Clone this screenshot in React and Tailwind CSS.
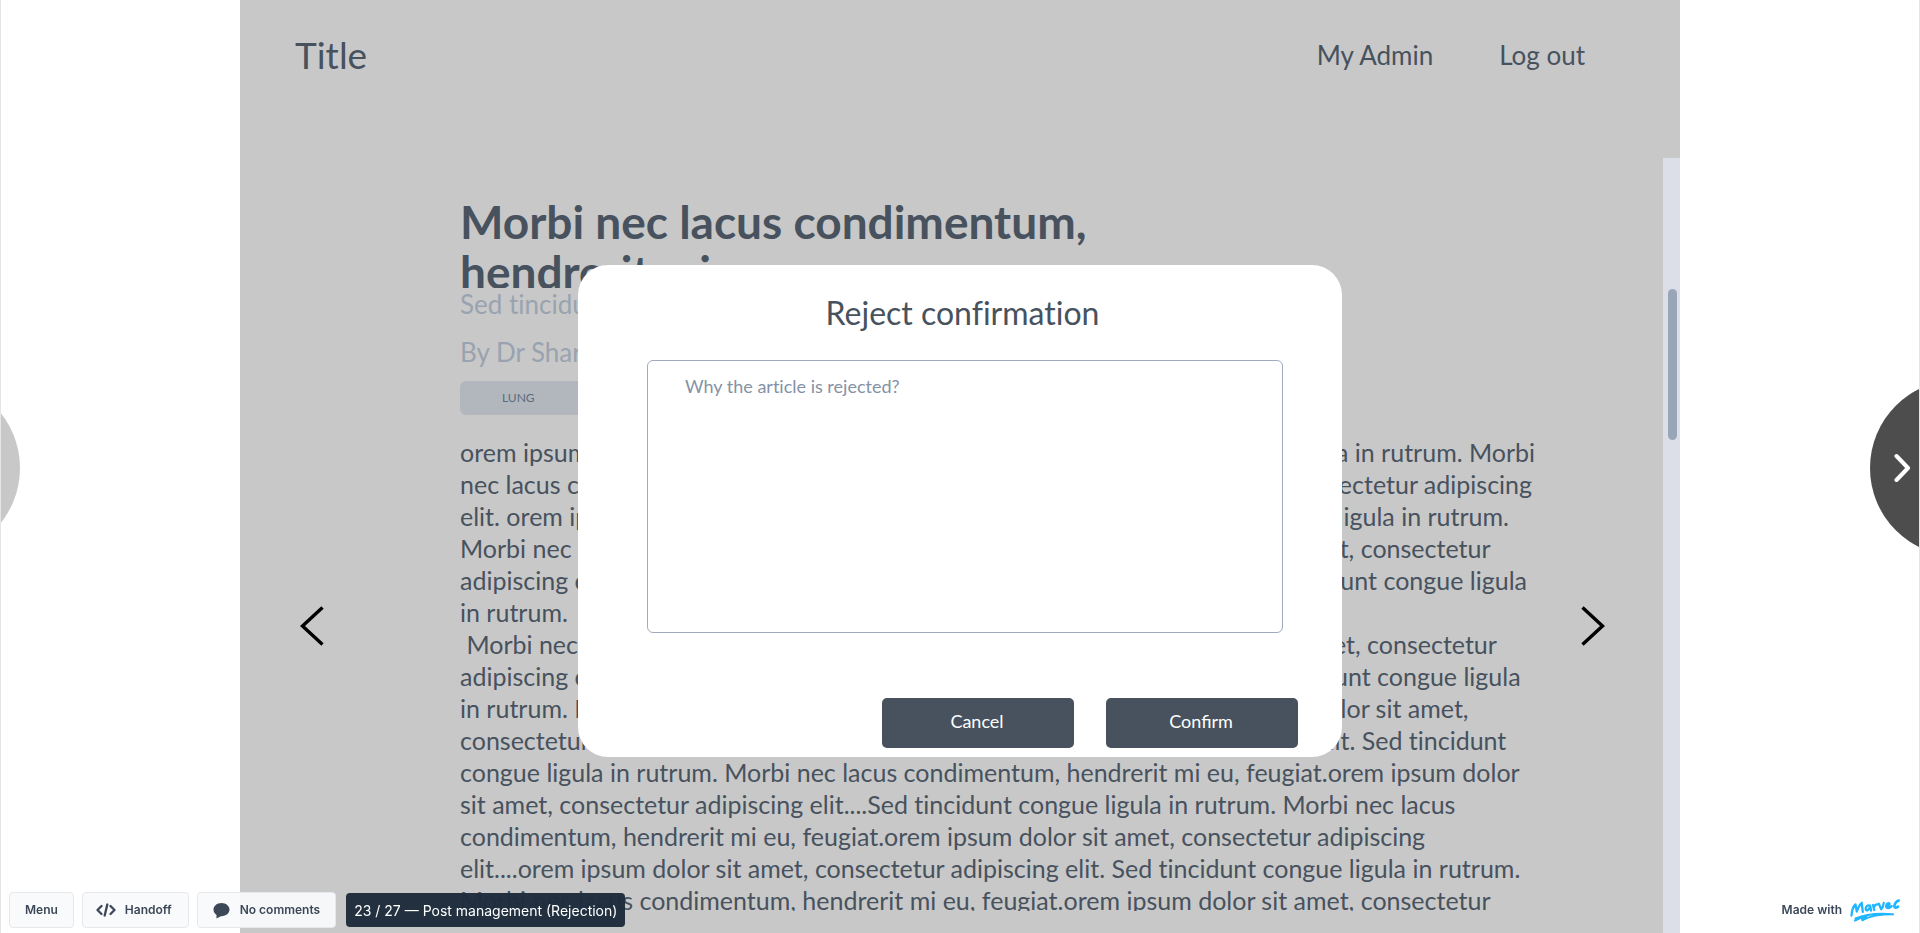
const INTRO =
  "orem ipsum dolor sit amet, consectetur adipiscing elit. Sed tincidunt congue ligula in rutrum. Morbi nec lacus condimentum, hendrerit mi eu, feugiat.orem ipsum dolor sit amet, consectetur adipiscing elit. orem ipsum dolor sit amet, consectetur adipiscing elit. Sed tincidunt congue ligula in rutrum. Morbi nec lacus condimentum, hendrerit mi eu, feugiat.orem ipsum dolor sit amet, consectetur adipiscing elit.... orem ipsum dolor sit amet, consectetur adipiscing elit. Sed tincidunt congue ligula in rutrum.";

const BODY =
  " Morbi nec lacus condimentum, hendrerit mi eu, feugiat.orem ipsum dolor sit amet, consectetur adipiscing elit....orem ipsum dolor sit amet, consectetur adipiscing elit. Sed tincidunt congue ligula in rutrum. Morbi nec lacus condimentum, hendrerit mi eu, feugiat.orem ipsum dolor sit amet, consectetur adipiscing elit....orem ipsum dolor sit amet, consectetur adipiscing elit. Sed tincidunt congue ligula in rutrum. Morbi nec lacus condimentum, hendrerit mi eu, feugiat.orem ipsum dolor sit amet, consectetur adipiscing elit....Sed tincidunt congue ligula in rutrum. Morbi nec lacus condimentum, hendrerit mi eu, feugiat.orem ipsum dolor sit amet, consectetur adipiscing elit....orem ipsum dolor sit amet, consectetur adipiscing elit. Sed tincidunt congue ligula in rutrum. Morbi nec lacus condimentum, hendrerit mi eu, feugiat.orem ipsum dolor sit amet, consectetur";

function Header() {
  return (
    <header className="flex h-[158px] items-start justify-between pl-[55px] pr-[95px]">
      <a href="#title" className="mt-[31px] text-[37px] leading-[48px]">Title</a>
      <nav className="mt-[31px] flex gap-[66px] text-[26px] leading-[48px]">
        <a href="#admin">My Admin</a>
        <a href="#logout">Log out</a>
      </nav>
    </header>
  );
}

function Article() {
  return (
    <article className="min-w-0 flex-1 pt-[39px] [font-variant-ligatures:none]">
      <h1 className="h-[91px] max-w-[720px] overflow-hidden text-[46px] font-bold leading-[50px]">
        Morbi nec lacus condimentum, hendrerit mi eu
      </h1>
      <div className="-mt-2 text-[26px] leading-[48px] text-[#99a3b0]">
        <p>Sed tincidunt congue ligula</p>
        <p>By Dr Sharma</p>
      </div>
      <div className="mt-[5px] flex">
        <span className="h-[34px] w-[125px] rounded-md bg-[#b2b7bd] pl-[42px] text-[12px] leading-[34px] text-[#5d6b7c]">
          LUNG
        </span>
      </div>
      <div className="mt-[21px] h-[475px] overflow-hidden whitespace-pre-wrap text-[25px] leading-8">
        <p>{INTRO}</p>
        <p>{BODY}</p>
      </div>
    </article>
  );
}

function RejectDialog() {
  return (
    <form
      role="dialog"
      aria-labelledby="reject-title"
      className="absolute left-1/2 top-[265px] flex h-[492px] w-[764px] -translate-x-1/2 flex-col rounded-[30px] bg-white pl-[69px] pr-11 pt-6"
    >
      <h2 id="reject-title" className="text-center text-[32px] leading-[48px] [font-variant-ligatures:none]">
        <label htmlFor="reason" className="pr-5">Reject confirmation</label>
      </h2>
      <textarea
        id="reason"
        placeholder="Why the article is rejected?"
        className="mr-[15px] mt-[23px] block h-[273px] resize-none rounded-md border border-[#a0abbd] bg-white px-[37px] py-[13px] text-[18px] leading-6 [font-variant-ligatures:none] placeholder:text-[#8492a6] placeholder:opacity-100"
      />
      <div className="mt-[65px] flex justify-end gap-8 text-[18px] text-white">
        <button type="button" className="h-[50px] w-48 rounded-[5px] bg-[#47525e] pb-1 pr-[2px]">Cancel</button>
        <button type="button" className="h-[50px] w-48 rounded-[5px] bg-[#47525e] pb-1 pr-[2px]">Confirm</button>
      </div>
    </form>
  );
}

function PageArrow({ direction }) {
  const left = direction === "left";
  return (
    <button type="button" aria-label={left ? "Previous article" : "Next article"}>
      <svg width="24" height="40" viewBox="0 0 24 40" fill="none" stroke="#000" strokeWidth="3.4">
        <path d={left ? "M22.5 1.5 2.5 20l20 18.5" : "M1.5 1.5l20 18.5-20 18.5"} />
      </svg>
    </button>
  );
}

function MarvelLogo() {
  return (
    <svg width="51" height="23" viewBox="0 0 51 23" fill="none" stroke="#1fb6ff" strokeLinecap="round" strokeLinejoin="round" aria-label="Marvel" role="img">
      <g strokeWidth="2.3">
        <path d="M1.500 16.500C1.800 12.500 3 7.500 5.500 5.500L6.800 12.500C8 9 9.500 5.500 11.700 3.800L12.800 12.800" />
        <path d="M20 6.700C17.500 5.500 15.600 7.600 15.700 10c.3 2.500 3.600 1.600 4.500-3.300l.8 4.800" />
        <path d="M23 6l1.200 5M23.900 8.600C24.500 6.500 25.800 5.200 27.600 5.400" />
        <path d="M28.800 4.800l2.400 5.400C32.600 8.700 33.500 6.500 33.700 4" />
        <path d="M36.300 7.200c2.200 0 3.700-1.300 3.200-2.700-1.200-1.100-3.500.5-3.400 3 .4 2.300 3.400 1.800 5.600-.4" />
        <path strokeWidth="2.600" d="M48.800 1.500C46.800 2.300 44.600 5 44.300 7.300c.1 1.700 1.900 1.700 3.700.3" />
      </g>
      <path strokeWidth="2" d="M13 21.200l-1-.4M5 21.500C9 19.300 13 18.400 16.500 18.100M5.500 19.500C15 15.500 29 14 43 15.300M13 20.800C20 17 31 15.300 43 15.300" />
    </svg>
  );
}

const chip =
  "flex h-9 items-center rounded border border-[#e6e8eb] bg-[#f9fafc]/95 text-[12px] font-semibold text-[#3c4858]";

function Toolbar() {
  return (
    <footer className="fixed inset-x-0 bottom-[5px] flex items-center gap-2 pl-[9px] pr-[19px] font-[Inter,sans-serif]">
      <button type="button" className={chip + " px-[15px]"}>Menu</button>
      <button type="button" className={chip + " gap-[9px] pl-[13px] pr-4"}>
        <svg width="20" height="14" viewBox="0 0 20 14" fill="none" stroke="currentColor" strokeWidth="2.300" strokeLinecap="round" strokeLinejoin="round">
          <path d="M5.500 3 1.500 7l4 4M14.500 3l4 4-4 4M11.300 1.500l-2.600 11" />
        </svg>
        Handoff
      </button>
      <button type="button" className={chip + " gap-[10px] px-[15px]"}>
        <svg width="17" height="17" viewBox="0 0 17 17" fill="currentColor">
          <path d="M8.500 1C4 1 .5 3.900.5 7.600c0 2.300 1.100 4.200 3 5.300V16.500l4.300-2.300C13 14.400 16.500 11.500 16.500 7.600 16.500 3.900 13 1 8.500 1z" />
        </svg>
        No comments
      </button>
      <p className="ml-[2px] flex h-[34px] items-center rounded bg-[#1f2d3d]/98 px-2 text-[14px] text-white">
        23 / 27 — Post management (Rejection)
      </p>
      <a href="#marvel" className="ml-auto flex items-center gap-2 text-[12px] font-semibold text-[#3c4858]">
        Made with
        <MarvelLogo />
      </a>
    </footer>
  );
}

export default function App() {
  return (
    <div className="relative h-screen overflow-hidden border-x border-[#e5e5e5] bg-white font-[Lato,sans-serif] text-[#47525e]">
      <main className="relative mx-auto flex h-full max-w-[1440px] flex-col overflow-hidden bg-[#c8c8c8]">
        <Header />
        <div className="flex min-h-0 flex-1">
          <div className="w-[220px] shrink-0 pl-[60px] pt-[448px]">
            <PageArrow direction="left" />
          </div>
          <Article />
          <div className="w-[119px] shrink-0 pl-[37px] pt-[448px]">
            <PageArrow direction="right" />
          </div>
          <div className="w-[17px] shrink-0 bg-[#dcdfe8] pl-[5px] pt-[131px]">
            <div className="h-[151px] w-[9px] rounded-full bg-[#99a6b7]" />
          </div>
        </div>
        <RejectDialog />
      </main>

      <button type="button" aria-label="Previous screen" className="absolute -left-[157px] top-[380px] size-44 rounded-full bg-[#c8c8c8]" />
      <button type="button" aria-label="Next screen" className="absolute -right-[127px] top-[380px] flex size-44 items-center rounded-full bg-[#4d4d4d] pl-6">
        <svg width="17" height="30" viewBox="0 0 17 30" fill="none" stroke="#fff" strokeWidth="4" strokeLinecap="round" strokeLinejoin="round">
          <path d="M2.500 3 14 15 2.500 27" />
        </svg>
      </button>
      <Toolbar />
    </div>
  );
}
